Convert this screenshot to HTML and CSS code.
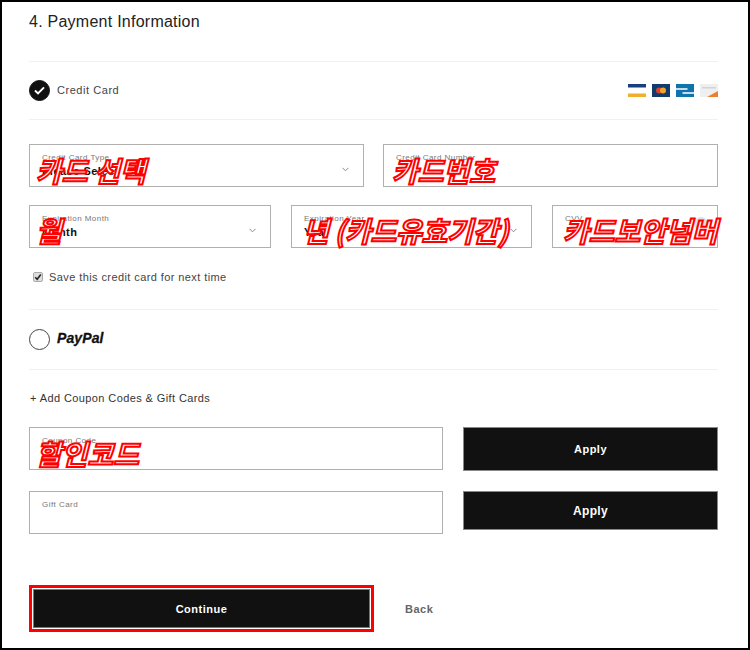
FILE: index.html
```html
<!DOCTYPE html>
<html lang="en">
<head>
    <meta charset="UTF-8">
    <meta name="viewport" content="width=device-width, initial-scale=1.0">
    <title>Payment Information</title>
    <link rel="stylesheet" href="styles.css">
</head>
<body>
    <div class="page">
        <h2 class="section-title">4. Payment Information</h2>

        <div class="pay-row credit-row">
            <span class="radio checked">
                <svg width="13" height="11" viewBox="0 0 13 11"><path d="M2 5.6 L5 8.4 L11 2.4" fill="none" stroke="#fff" stroke-width="2"/></svg>
            </span>
            <span class="pay-label">Credit Card</span>
            <div class="card-icons">
                <svg width="18" height="13" viewBox="0 0 18 13"><rect width="18" height="13" fill="#fff"/><rect width="18" height="3.5" fill="#1a3f7d"/><rect y="9.5" width="18" height="3.5" fill="#eeb02e"/></svg>
                <svg width="18" height="13" viewBox="0 0 18 13"><rect width="18" height="13" fill="#123a6b"/><circle cx="7" cy="6.5" r="3" fill="#d9402e"/><circle cx="11" cy="6.5" r="3" fill="#eda62c"/></svg>
                <svg width="18" height="13" viewBox="0 0 18 13"><rect width="18" height="13" fill="#0f74ad"/><path d="M0 5 H11.5 M6.5 9 H18" fill="none" stroke="#fff" stroke-width="1.4"/></svg>
                <svg width="18" height="13" viewBox="0 0 18 13"><rect width="18" height="13" fill="#efefef"/><rect x="2" y="3" width="14" height="1.5" fill="#d4d4d4"/><path d="M7 13 L18 7 V13 Z" fill="#ee7f2d"/></svg>
            </div>
        </div>

        <div class="form-row first-row">
            <div class="field half">
                <span class="field-label">Credit Card Type</span>
                <span class="field-value">Please Select</span>
                <svg class="chevron" width="7" height="5" viewBox="0 0 7 5"><path d="M0.5 0.8 L3.5 3.8 L6.5 0.8" fill="none" stroke="#888" stroke-width="1"/></svg>
                <span class="note note-type">카드 선택</span>
            </div>
            <div class="field half">
                <span class="field-label">Credit Card Number</span>
                <span class="note note-number">카드번호</span>
            </div>
        </div>

        <div class="form-row second-row">
            <div class="field month">
                <span class="field-label">Expiration Month</span>
                <span class="field-value">Month</span>
                <svg class="chevron" width="7" height="5" viewBox="0 0 7 5"><path d="M0.5 0.8 L3.5 3.8 L6.5 0.8" fill="none" stroke="#888" stroke-width="1"/></svg>
                <span class="note note-month">월</span>
            </div>
            <div class="field year">
                <span class="field-label">Expiration Year</span>
                <span class="field-value">Year</span>
                <svg class="chevron" width="7" height="5" viewBox="0 0 7 5"><path d="M0.5 0.8 L3.5 3.8 L6.5 0.8" fill="none" stroke="#888" stroke-width="1"/></svg>
                <span class="note note-year">년 (카드유효기간)</span>
            </div>
            <div class="field cvv">
                <span class="field-label">CVV</span>
                <span class="help-dot"></span>
                <span class="note note-cvv">카드보안넘버</span>
            </div>
        </div>

        <div class="save-row">
            <span class="save-box">
                <svg width="8" height="8" viewBox="0 0 8 8"><path d="M1.2 4.2 L3.2 6.2 L6.8 1.6" fill="none" stroke="#222" stroke-width="1.6"/></svg>
            </span>
            <span>Save this credit card for next time</span>
        </div>

        <div class="pay-row paypal-row">
            <span class="radio"></span>
            <span class="paypal-label">PayPal</span>
        </div>

        <div class="coupon-toggle">+ Add Coupon Codes &amp; Gift Cards</div>

        <div class="code-row coupon-row">
            <div class="field code">
                <span class="field-label">Coupon Code</span>
                <span class="note note-coupon">할인코드</span>
            </div>
            <button class="apply-btn">Apply</button>
        </div>

        <div class="code-row gift-row">
            <div class="field code">
                <span class="field-label">Gift Card</span>
            </div>
            <button class="apply-btn short">Apply</button>
        </div>

        <div class="actions">
            <div class="continue-wrap">
                <button class="continue-btn">Continue</button>
            </div>
            <span class="back-link">Back</span>
        </div>
    </div>
</body>
</html>
```

FILE: styles.css
```css
body {
    margin: 0;
    background-color: #fff;
    font-family: "Liberation Sans", Arial, sans-serif;
}

.page {
    width: 750px;
    height: 650px;
    box-sizing: border-box;
    border: 2px solid #000;
    padding: 0 30px 0 27px;
    overflow: hidden;
}

.section-title {
    margin: 0;
    padding-top: 10px;
    box-sizing: border-box;
    border-bottom: 1px solid #f1f1f1;
    height: 60px;
    font-size: 16px;
    line-height: 20px;
    font-weight: 400;
    letter-spacing: 0.25px;
    color: #222;
}

.pay-row {
    display: flex;
    align-items: center;
    border-bottom: 1px solid #f1f1f1;
    box-sizing: border-box;
}

.credit-row {
    height: 58px;
}

.paypal-row {
    height: 61px;
}

.radio {
    width: 21px;
    height: 21px;
    box-sizing: border-box;
    border: 1px solid #444;
    border-radius: 50%;
    display: flex;
    align-items: center;
    justify-content: center;
    flex-shrink: 0;
}

.radio.checked {
    background-color: #111;
    border-color: #111;
}

.pay-label {
    margin: 0 0 1px 7px;
    font-size: 11px;
    letter-spacing: 0.55px;
    color: #444;
}

.paypal-label {
    margin: 0 0 3px 7px;
    font-size: 14px;
    font-weight: 700;
    font-style: italic;
    letter-spacing: 0.1px;
    color: #111;
    -webkit-text-stroke: 0.3px #111;
}

.card-icons {
    margin-left: auto;
    display: flex;
    gap: 6px;
}

.form-row {
    display: flex;
    justify-content: space-between;
}

.first-row {
    margin-top: 24px;
}

.second-row {
    margin-top: 18px;
}

.field {
    position: relative;
    height: 43px;
    box-sizing: border-box;
    border: 1px solid #b0b0b0;
    padding: 8px 12px 0;
    background-color: #fff;
}

.half {
    width: 335px;
}

.month {
    width: 242px;
}

.year {
    width: 241px;
}

.cvv {
    width: 166px;
}

.code {
    width: 414px;
}

.field-label {
    display: block;
    font-size: 8px;
    line-height: 10px;
    letter-spacing: 0.45px;
    color: #777;
}

.field-value {
    display: block;
    margin-top: 1px;
    font-size: 11px;
    line-height: 14px;
    font-weight: 700;
    letter-spacing: 0.5px;
    color: #111;
}

.chevron {
    position: absolute;
    right: 14px;
    top: 22px;
}

.help-dot {
    position: absolute;
    right: 9px;
    top: 11px;
    width: 14px;
    height: 14px;
    border-radius: 50%;
    background-color: #e2e2e2;
}

.note {
    position: absolute;
    font-family: "Noto Sans CJK KR", sans-serif;
    font-size: 28px;
    line-height: 30px;
    font-weight: 700;
    font-style: italic;
    white-space: nowrap;
    color: #fff;
    -webkit-text-stroke: 2px #f00;
}

.note-type {
    left: 6px;
    top: 10px;
}

.note-number {
    left: 8px;
    top: 10px;
}

.note-month {
    left: 6px;
    top: 9px;
}

.note-year {
    left: 11px;
    top: 9px;
    letter-spacing: -0.25px;
}

.note-cvv {
    left: 10px;
    top: 9px;
}

.note-coupon {
    left: 6px;
    top: 10px;
}

.save-row {
    display: flex;
    align-items: center;
    height: 22px;
    margin-top: 18px;
    padding-left: 4px;
    font-size: 11px;
    letter-spacing: 0.41px;
    color: #444;
}

.save-box {
    width: 10px;
    height: 10px;
    box-sizing: border-box;
    margin-right: 6px;
    border: 1px solid #aaa;
    border-radius: 2px;
    background-color: #ddd;
    display: flex;
    align-items: center;
    justify-content: center;
}

.save-row + .pay-row {
    border-top: 1px solid #f1f1f1;
    margin-top: 21px;
}

.coupon-toggle {
    margin-top: 21px;
    padding-left: 1px;
    font-size: 11px;
    line-height: 14px;
    letter-spacing: 0.4px;
    color: #333;
}

.code-row {
    display: flex;
    justify-content: space-between;
    align-items: flex-start;
}

.coupon-row {
    margin-top: 22px;
}

.gift-row {
    margin-top: 20px;
}

.apply-btn {
    width: 255px;
    height: 44px;
    border: 1px solid #888;
    background-color: #111;
    color: #fff;
    font-family: inherit;
    font-size: 11px;
    font-weight: 700;
    letter-spacing: 0.5px;
}

.apply-btn.short {
    height: 39px;
    font-size: 12px;
    letter-spacing: 0.3px;
}

.actions {
    display: flex;
    align-items: center;
    margin-top: 51px;
}

.continue-wrap {
    border: 3px solid #f00;
    padding: 1px;
    background-color: #fff;
}

.continue-btn {
    display: block;
    width: 337px;
    height: 39px;
    border: 1px solid #777;
    background-color: #111;
    color: #fff;
    font-family: inherit;
    font-size: 11px;
    font-weight: 700;
    letter-spacing: 0.5px;
}

.back-link {
    margin-left: 31px;
    font-size: 11px;
    font-weight: 700;
    letter-spacing: 0.5px;
    color: #666;
}
```
